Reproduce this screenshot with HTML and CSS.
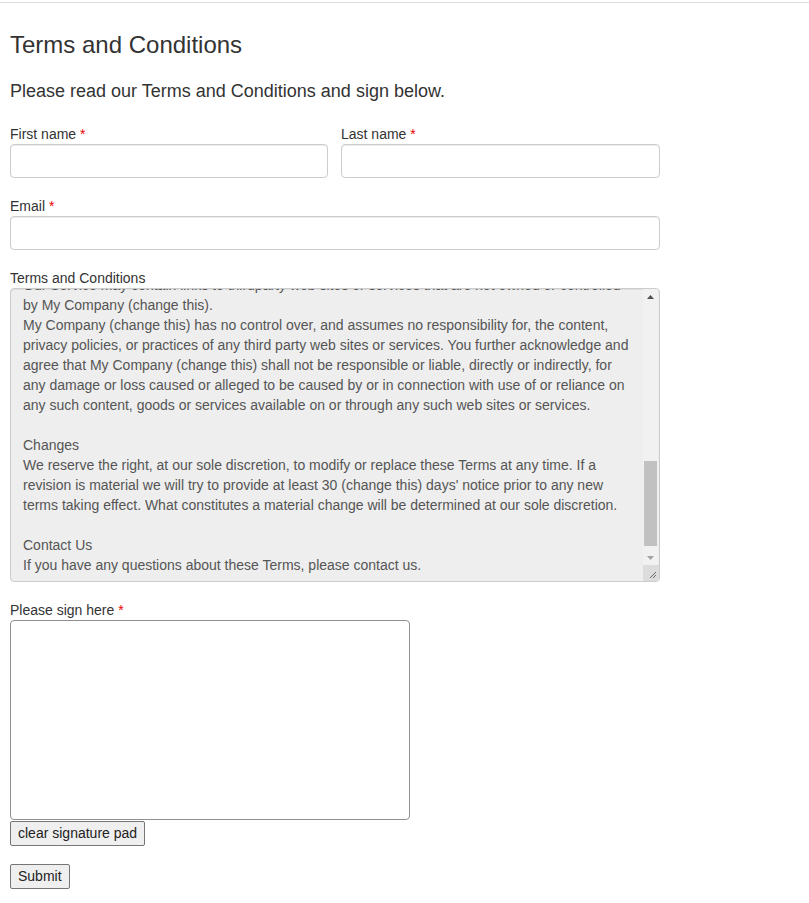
FILE: index.html
```html
<!DOCTYPE html>
<html lang="en">
<head>
<meta charset="utf-8">
<title>Terms and Conditions</title>
<link rel="stylesheet" href="styles.css">
</head>
<body>
<div class="topline"></div>
<div class="page">
  <h3 class="title">Terms and Conditions</h3>
  <p class="lead">Please read our Terms and Conditions and sign below.</p>
  <form class="form">
    <div class="row">
      <div class="group">
        <label class="label" for="fn">First name <span class="req">*</span></label>
        <input class="control" id="fn" type="text">
      </div>
      <div class="group">
        <label class="label" for="ln">Last name <span class="req">*</span></label>
        <input class="control" id="ln" type="text">
      </div>
    </div>
    <div class="group">
      <label class="label" for="em">Email <span class="req">*</span></label>
      <input class="control" id="em" type="email">
    </div>
    <div class="group">
      <label class="label" for="tc">Terms and Conditions</label>
      <div class="terms-box">
      <textarea class="terms" id="tc" readonly>Terms and Conditions ("Terms")
Last updated: (add date)
Please read these Terms and Conditions ("Terms", "Terms and Conditions") carefully before using the http://www.mywebsite.com (change this) website and the My Mobile App (change this) mobile application (the "Service") operated by My Company (change this) ("us", "we", or "our").
Your access to and use of the Service is conditioned on your acceptance of and compliance with these Terms. These Terms apply to all visitors, users and others who access or use the Service.
By accessing or using the Service you agree to be bound by these Terms. If you disagree with any part of the terms then you may not access the Service.

Purchases
If you wish to purchase any product or service made available through the Service ("Purchase"), you may be asked to supply certain information relevant to your Purchase including, without limitation, your credit card number, the expiration date of your credit card, your billing address, and your shipping information.

Subscriptions
Some parts of the Service are billed on a subscription basis ("Subscription(s)"). You will be billed in advance on a recurring and periodic basis ("Billing Cycle").

Content
Our Service allows you to post, link, store, share and otherwise make available certain information, text, graphics, videos, or other material ("Content"). You are responsible for the legality, reliability, and appropriateness of the Content.

Links To Other Web Sites
Our Service may contain links to thirdparty web sites or services that are not owned or controlled by My Company (change this).
My Company (change this) has no control over, and assumes no responsibility for, the content, privacy policies, or practices of any third party web sites or services. You further acknowledge and agree that My Company (change this) shall not be responsible or liable, directly or indirectly, for any damage or loss caused or alleged to be caused by or in connection with use of or reliance on any such content, goods or services available on or through any such web sites or services.

Changes
We reserve the right, at our sole discretion, to modify or replace these Terms at any time. If a revision is material we will try to provide at least 30 (change this) days' notice prior to any new terms taking effect. What constitutes a material change will be determined at our sole discretion.

Contact Us
If you have any questions about these Terms, please contact us.</textarea>
        <div class="sbar" aria-hidden="true">
          <div class="sbtn">
            <svg width="7" height="4" viewBox="0 0 7 4"><path d="M0 4 L3.5 0 L7 4 Z" fill="#505050"/></svg>
          </div>
          <div class="strack"><div class="sthumb"></div></div>
          <div class="sbtn">
            <svg width="7" height="4" viewBox="0 0 7 4"><path d="M0 0 L7 0 L3.5 4 Z" fill="#a3a3a3"/></svg>
          </div>
        </div>
        <div class="scorner" aria-hidden="true">
          <svg width="15" height="15" viewBox="0 0 15 15"><path d="M13 7 L7 13 M13 10 L10 13" stroke="#6b6b6b" stroke-width="1" fill="none"/></svg>
        </div>
      </div>
    </div>
    <div class="group sign">
      <label class="label">Please sign here <span class="req">*</span></label>
      <canvas class="pad" width="398" height="198"></canvas>
      <button type="button" class="btn">clear signature pad</button>
    </div>
    <button type="button" class="btn">Submit</button>
  </form>
</div>
<script src="script.js"></script>
</body>
</html>
```

FILE: styles.css
```css
html, body {
  margin: 0;
  padding: 0;
  background: #fff;
}
body {
  font-family: "Liberation Sans", Arial, sans-serif;
  font-size: 14px;
  line-height: 20px;
  color: #333;
}
.topline {
  margin-top: 2px;
  border-top: 1px solid #dedede;
}
.page {
  padding: 0 10px;
  width: 650px;
}
.title {
  margin: 29px 0 0;
  font-size: 24px;
  line-height: 26px;
  font-weight: 400;
  color: #333;
}
.lead {
  margin: 23px 0 0;
  font-size: 18px;
  line-height: 20px;
  color: #333;
}
.form {
  margin-top: 23px;
}
.row {
  display: grid;
  grid-template-columns: 318px 319px;
  column-gap: 13px;
}
.group {
  display: flex;
  flex-direction: column;
  margin-bottom: 18px;
}
.label {
  display: block;
  line-height: 20px;
  font-weight: 400;
}
.req {
  color: #e00;
}
.control {
  display: block;
  box-sizing: border-box;
  width: 100%;
  height: 34px;
  margin: 0;
  padding: 6px 12px;
  font: 14px/20px "Liberation Sans", Arial, sans-serif;
  color: #555;
  background: #fff;
  border: 1px solid #ccc;
  border-radius: 4px;
  box-shadow: inset 0 1px 1px rgba(0,0,0,.075);
}
.terms-box {
  position: relative;
  width: 650px;
  height: 294px;
}
.terms {
  display: block;
  box-sizing: border-box;
  width: 650px;
  height: 294px;
  margin: 0;
  padding: 6px 27px 6px 12px;
  font: 14px/20px "Liberation Sans", Arial, sans-serif;
  color: #555;
  background: #eee;
  border: 1px solid #ccc;
  border-radius: 4px;
  box-shadow: inset 0 1px 1px rgba(0,0,0,.075);
  resize: none;
  overflow-y: scroll;
}
.sbar {
  position: absolute;
  top: 1px;
  right: 2px;
  bottom: 17px;
  width: 15px;
  display: flex;
  flex-direction: column;
  background: #f1f1f1;
}
.sbtn {
  height: 15px;
  display: flex;
  align-items: center;
  justify-content: center;
  flex: none;
}
.sbtn svg {
  display: block;
}
.strack {
  flex: 1;
  padding: 0 1px;
}
.sthumb {
  margin-top: 157px;
  height: 85px;
  background: #c1c1c1;
}
.scorner {
  position: absolute;
  right: 1px;
  bottom: 1px;
  width: 16px;
  height: 16px;
  background: #dcdcdc;
  border-bottom-right-radius: 3px;
}
.scorner svg {
  display: block;
}
.sign {
  margin-bottom: 18px;
  align-items: flex-start;
}
.pad {
  display: block;
  border: 1px solid #8f8f8f;
  border-radius: 4px;
  background: #fff;
}
.btn {
  display: block;
  margin: 1px 0 0;
  padding: 3px 7px;
  font: 14px/17px "Liberation Sans", Arial, sans-serif;
  color: #222;
  background: #efefef;
  border: 1px solid #767676;
  border-radius: 2px;
}
```

FILE: script.js
```js
var t = document.getElementById('tc');
t.scrollTop = t.scrollHeight;
```
